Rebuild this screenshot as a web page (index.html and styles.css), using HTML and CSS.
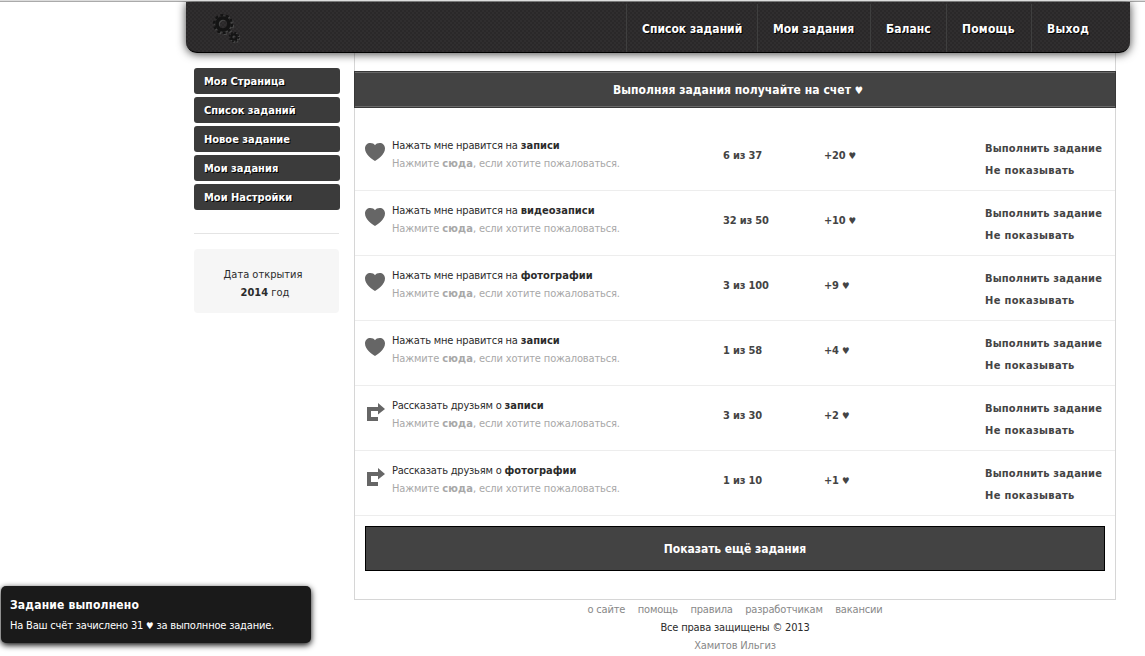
FILE: index.html
```
<!DOCTYPE html>
<html lang="ru">
<head>
<meta charset="utf-8">
<title>Список заданий</title>
<link rel="stylesheet" href="styles.css">
</head>
<body>
<svg class="defs" width="0" height="0" aria-hidden="true">
  <symbol id="heart" viewBox="0 0 20 18"><path d="M10 18C7.500 16.500 0 11.500 0 5.500C0 2 2.500 0 5.300 0C7.500 0 9 .8 10 2.200C11 .8 12.500 0 14.700 0C17.500 0 20 2 20 5.500C20 11.500 12.500 16.500 10 18Z"/></symbol>
  <symbol id="share" viewBox="0 0 20 18"><path d="M2 4H13V0L20 6L13 11.500V8H6V14H13V18H2Z"/></symbol>
</svg>
<div class="page">
  <header class="header">
    <svg class="gears" width="30" height="30" viewBox="0 0 30 30">
      <g class="gear-glow" transform="translate(1 1)"><circle cx="12" cy="11" r="6" stroke-width="3.600"/><circle cx="12" cy="11" r="8.800" stroke-width="2.600" stroke-dasharray="2.900 2.629"/><circle cx="23" cy="24" r="2.700" stroke-width="2.200"/><circle cx="23" cy="24" r="4.400" stroke-width="1.600" stroke-dasharray="1.750 1.706"/></g>
      <g class="gear-ink"><circle cx="12" cy="11" r="6" stroke-width="3.600"/><circle cx="12" cy="11" r="8.800" stroke-width="2.600" stroke-dasharray="2.900 2.629"/><circle cx="23" cy="24" r="2.700" stroke-width="2.200"/><circle cx="23" cy="24" r="4.400" stroke-width="1.600" stroke-dasharray="1.750 1.706"/></g>
    </svg>
    <nav class="nav"><a class="n1">Список заданий</a><a class="n2">Мои задания</a><a class="n3">Баланс</a><a class="n4">Помощь</a><a class="n5">Выход</a></nav>
  </header>
  <div class="columns">
    <aside class="sidebar">
      <nav class="menu"><a>Моя Страница</a><a>Список заданий</a><a>Новое задание</a><a>Мои задания</a><a>Мои Настройки</a></nav>
      <div class="opened"><div>Дата открытия</div><div class="year"><b>2014</b> год</div></div>
    </aside>
    <div class="main">
      <main class="content">
        <h1 class="title">Выполняя задания получайте на счет <span class="heart">♥</span></h1>
        <div class="tasks">
          <div class="task"><svg class="icon"><use href="#heart"/></svg><div class="about"><div>Нажать мне нравится на <b>записи</b></div><div class="hint">Нажмите <b>сюда</b>, если хотите пожаловаться.</div></div><div class="count">6 из 37</div><div class="price">+20 <span class="heart">♥</span></div><div class="actions"><a>Выполнить задание</a><a>Не показывать</a></div></div>
          <div class="task"><svg class="icon"><use href="#heart"/></svg><div class="about"><div>Нажать мне нравится на <b>видеозаписи</b></div><div class="hint">Нажмите <b>сюда</b>, если хотите пожаловаться.</div></div><div class="count">32 из 50</div><div class="price">+10 <span class="heart">♥</span></div><div class="actions"><a>Выполнить задание</a><a>Не показывать</a></div></div>
          <div class="task"><svg class="icon"><use href="#heart"/></svg><div class="about"><div>Нажать мне нравится на <b>фотографии</b></div><div class="hint">Нажмите <b>сюда</b>, если хотите пожаловаться.</div></div><div class="count">3 из 100</div><div class="price">+9 <span class="heart">♥</span></div><div class="actions"><a>Выполнить задание</a><a>Не показывать</a></div></div>
          <div class="task"><svg class="icon"><use href="#heart"/></svg><div class="about"><div>Нажать мне нравится на <b>записи</b></div><div class="hint">Нажмите <b>сюда</b>, если хотите пожаловаться.</div></div><div class="count">1 из 58</div><div class="price">+4 <span class="heart">♥</span></div><div class="actions"><a>Выполнить задание</a><a>Не показывать</a></div></div>
          <div class="task"><svg class="icon"><use href="#share"/></svg><div class="about"><div>Рассказать друзьям о <b>записи</b></div><div class="hint">Нажмите <b>сюда</b>, если хотите пожаловаться.</div></div><div class="count">3 из 30</div><div class="price">+2 <span class="heart">♥</span></div><div class="actions"><a>Выполнить задание</a><a>Не показывать</a></div></div>
          <div class="task"><svg class="icon"><use href="#share"/></svg><div class="about"><div>Рассказать друзьям о <b>фотографии</b></div><div class="hint">Нажмите <b>сюда</b>, если хотите пожаловаться.</div></div><div class="count">1 из 10</div><div class="price">+1 <span class="heart">♥</span></div><div class="actions"><a>Выполнить задание</a><a>Не показывать</a></div></div>
        </div>
        <button class="more">Показать ещё задания</button>
      </main>
      <footer class="footer">
        <div class="links"><a>о сайте</a><a>помощь</a><a>правила</a><a>разработчикам</a><a>вакансии</a></div>
        <div>Все права защищены © 2013</div>
        <div class="author">Хамитов Ильгиз</div>
      </footer>
    </div>
  </div>
</div>
<div class="toast"><div class="toast-title">Задание выполнено</div><div class="toast-text">На Ваш счёт зачислено 31 <span class="heart">♥</span> за выполнное задание.</div></div>
</body>
</html>
```
FILE: styles.css
```
* { box-sizing: border-box; }
body {
  margin: 0;
  height: 656px;
  overflow: hidden;
  background: #fff;
  border-top: 1px solid #ddd;
  color: #2b2b2b;
  font: 11px/18px Tahoma, "DejaVu Sans Condensed", "DejaVu Sans", sans-serif;
  letter-spacing: -0.17px;
}
body::before { content: ""; display: block; height: 1px; background: #aaa; }
.defs { position: absolute; }
.heart { font-size: .85em; line-height: 1; }
.page { width: 944px; margin-left: 186px; }
.header {
  position: relative;
  display: flex;
  justify-content: space-between;
  height: 51px;
  padding: 0 25px;
  border-bottom: 1px solid #000;
  border-radius: 0 0 11px 11px;
  background: repeating-conic-gradient(#2a2829 0 25%, #302e2f 0 50%) 0 0 / 4px 4px;
  box-shadow: 0 1px 10px rgba(0, 0, 0, .75);
}
.gears { margin-top: 11px; fill: none; }
.gear-glow { stroke: #484848; }
.gear-ink { stroke: #141414; }
.nav { display: flex; margin-top: 2px; }
.nav a {
  padding: 16px 0 0 15px;
  border-left: 1px solid #3f3f3f;
  color: #fff;
  font-size: 12px;
  font-weight: bold;
  letter-spacing: .02px;
  text-shadow: 1px 1px 0 #000;
  white-space: nowrap;
}
.n1 { width: 131px; }
.n2 { width: 113px; }
.n3 { width: 76px; }
.n4 { width: 85px; }
.n5 { width: 74px; }
.nav .n4, .nav .n5 { letter-spacing: .2px; }
.columns { display: flex; padding-left: 8px; }
.sidebar { width: 160px; padding-top: 15px; }
.menu { display: flex; flex-direction: column; gap: 3px; width: 146px; }
.menu a {
  height: 26px;
  padding: 5px 10px 3px;
  border-radius: 3px;
  background: #3b3b3b;
  color: #fff;
  font-weight: bold;
  letter-spacing: 0;
  text-shadow: 1px 1px 0 #000;
}
.opened {
  position: relative;
  width: 145px;
  height: 64px;
  margin-top: 39px;
  padding: 17px 7px 0 0;
  border-radius: 4px;
  background: #f6f6f6;
  letter-spacing: 0;
  text-align: center;
}
.opened::before { content: ""; position: absolute; left: 0; top: -16px; width: 145px; height: 1px; background: #e4e4e4; }
.year { padding-left: 4px; }
.main { width: 762px; }
.content { height: 547px; border: 1px solid #d6d6d6; border-top: 0; padding-top: 18px; }
.title {
  height: 37px;
  margin: 0 -1px;
  padding-left: 6px;
  border: 1px solid #383838;
  background: #434343;
  box-shadow: inset 0 1px #696969, inset 0 -1px #696969;
  color: #fff;
  font-size: 12px;
  letter-spacing: .05px;
  line-height: 36px;
  text-align: center;
}
.tasks { padding-top: 18px; }
.task {
  display: grid;
  grid-template-columns: 27px 331px 101px 161px 1fr;
  height: 65px;
  padding: 11px 0 0 10px;
  border-bottom: 1px solid #ededed;
  white-space: nowrap;
}
.icon { width: 20px; height: 18px; margin-top: 6px; fill: #666; }
.about { letter-spacing: -0.21px; }
.about b { letter-spacing: .03px; }
.about .hint { color: #a8a8a8; letter-spacing: -0.15px; }
.hint b { letter-spacing: .2px; }
.count, .price { padding-top: 10px; color: #444; font-weight: bold; }
.price { letter-spacing: -0.25px; }
.actions { display: flex; flex-direction: column; padding-top: 1px; color: #444; font-weight: bold; letter-spacing: .17px; line-height: 22px; }
.actions a + a { letter-spacing: .35px; }
.more {
  display: block;
  width: 740px;
  height: 45px;
  margin: 10px 10px 0;
  border: 1px solid #000;
  background: #434343;
  color: #fff;
  font: bold 12px Tahoma, "DejaVu Sans Condensed", sans-serif;
  letter-spacing: -0.05px;
}
.footer { padding-top: 1px; text-align: center; }
.links { display: flex; justify-content: center; gap: 12.500px; }
.links, .author { color: #888; }
.toast {
  position: absolute;
  left: 1px;
  top: 586px;
  width: 310px;
  height: 57px;
  padding: 10px 9px;
  border-radius: 5px;
  background: #1a1a1a;
  box-shadow: 0 2px 6px #000;
  color: #fff;
  white-space: nowrap;
}
.toast-title { font-size: 12px; font-weight: bold; letter-spacing: .17px; }
.toast-text { padding-top: 3px; letter-spacing: -0.19px; }
```
